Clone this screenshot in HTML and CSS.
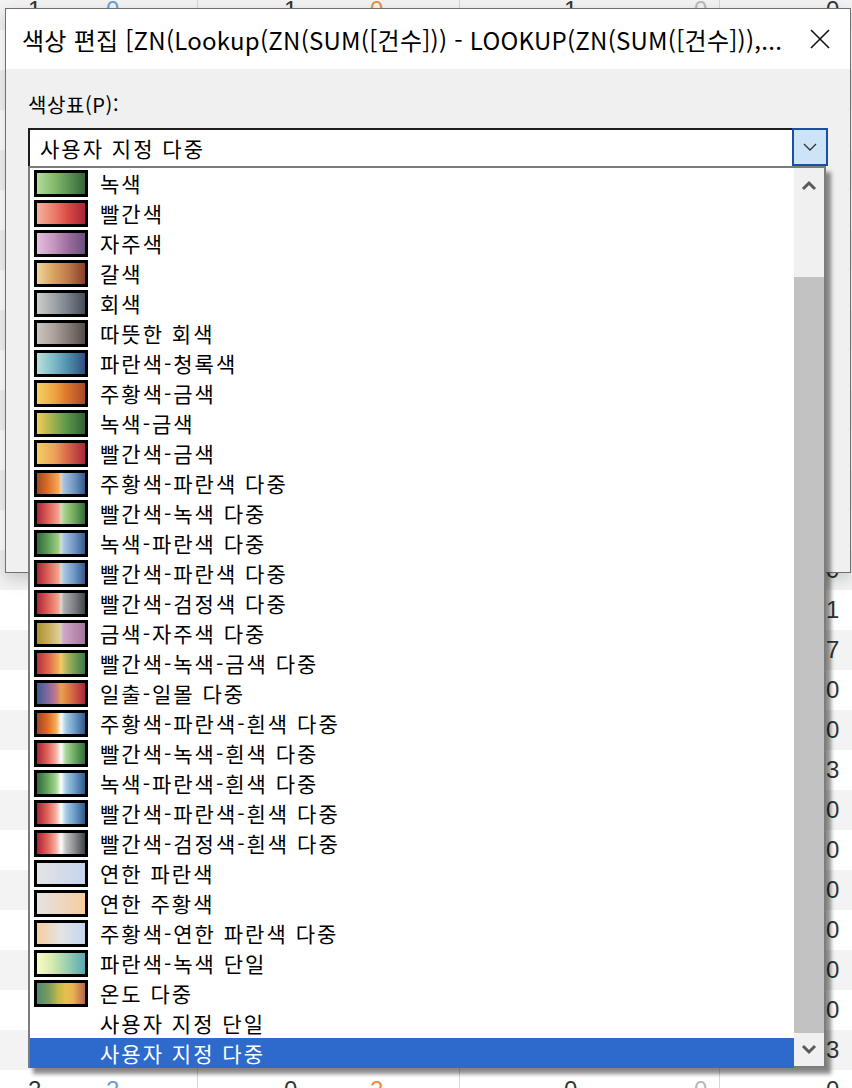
FILE: index.html
```html
<!DOCTYPE html>
<html lang="ko">
<head>
    <meta charset="UTF-8">
    <meta name="viewport" content="width=device-width, initial-scale=1.0">
    <title>색상 편집</title>
    <link rel="stylesheet" href="styles.css">
</head>
<body>
    <div id="sheet" class="sheet"></div>

    <div class="dialog">
        <div class="titlebar">
            <span class="title">색상 편집 [ZN(Lookup(ZN(SUM([건수])) - LOOKUP(ZN(SUM([건수])),...</span>
            <svg class="close-icon" width="22" height="22" viewBox="0 0 22 22">
                <line x1="2" y1="2" x2="20" y2="20" stroke="#111" stroke-width="1.6"/>
                <line x1="20" y1="2" x2="2" y2="20" stroke="#111" stroke-width="1.6"/>
            </svg>
        </div>
        <div class="dialog-body">
            <div class="field-label">색상표(P):</div>
            <div class="combo">
                <span class="combo-text">사용자 지정 다중</span>
                <div class="combo-btn">
                    <svg width="14" height="8" viewBox="0 0 14 8">
                        <polyline points="1,1 7,7 13,1" fill="none" stroke="#333" stroke-width="1.3"/>
                    </svg>
                </div>
            </div>
        </div>
    </div>

    <div class="dropdown">
        <ul class="options">
            <li><span class="swatch sw-green"></span>녹색</li>
            <li><span class="swatch sw-red"></span>빨간색</li>
            <li><span class="swatch sw-purple"></span>자주색</li>
            <li><span class="swatch sw-brown"></span>갈색</li>
            <li><span class="swatch sw-gray"></span>회색</li>
            <li><span class="swatch sw-warmgray"></span>따뜻한 회색</li>
            <li><span class="swatch sw-blueteal"></span>파란색-청록색</li>
            <li><span class="swatch sw-orangegold"></span>주황색-금색</li>
            <li><span class="swatch sw-greengold"></span>녹색-금색</li>
            <li><span class="swatch sw-redgold"></span>빨간색-금색</li>
            <li><span class="swatch sw-orange-blue"></span>주황색-파란색 다중</li>
            <li><span class="swatch sw-red-green"></span>빨간색-녹색 다중</li>
            <li><span class="swatch sw-green-blue"></span>녹색-파란색 다중</li>
            <li><span class="swatch sw-red-blue"></span>빨간색-파란색 다중</li>
            <li><span class="swatch sw-red-black"></span>빨간색-검정색 다중</li>
            <li><span class="swatch sw-gold-purple"></span>금색-자주색 다중</li>
            <li><span class="swatch sw-red-green-gold"></span>빨간색-녹색-금색 다중</li>
            <li><span class="swatch sw-sunrise"></span>일출-일몰 다중</li>
            <li><span class="swatch sw-orange-blue-white"></span>주황색-파란색-흰색 다중</li>
            <li><span class="swatch sw-red-green-white"></span>빨간색-녹색-흰색 다중</li>
            <li><span class="swatch sw-green-blue-white"></span>녹색-파란색-흰색 다중</li>
            <li><span class="swatch sw-red-blue-white"></span>빨간색-파란색-흰색 다중</li>
            <li><span class="swatch sw-red-black-white"></span>빨간색-검정색-흰색 다중</li>
            <li><span class="swatch sw-lightblue"></span>연한 파란색</li>
            <li><span class="swatch sw-lightorange"></span>연한 주황색</li>
            <li><span class="swatch sw-orange-lightblue"></span>주황색-연한 파란색 다중</li>
            <li><span class="swatch sw-bluegreen"></span>파란색-녹색 단일</li>
            <li><span class="swatch sw-temperature"></span>온도 다중</li>
            <li class="no-swatch">사용자 지정 단일</li>
            <li class="no-swatch selected">사용자 지정 다중</li>
        </ul>
        <div class="scrollbar">
            <div class="scroll-btn up">
                <svg width="16" height="11" viewBox="0 0 16 11">
                    <polyline points="2,9 8,3 14,9" fill="none" stroke="#5a5a5a" stroke-width="3"/>
                </svg>
            </div>
            <div class="scroll-track"><div class="scroll-thumb"></div></div>
            <div class="scroll-btn down">
                <svg width="16" height="11" viewBox="0 0 16 11">
                    <polyline points="2,2 8,8 14,2" fill="none" stroke="#5a5a5a" stroke-width="3"/>
                </svg>
            </div>
        </div>
    </div>

    <script>
        // worksheet rows behind the dialog (only the visible cells get numbers)
        var rightValues = { 14: '0', 15: '1', 16: '7', 17: '0', 18: '0', 19: '3', 20: '0',
            21: '0', 22: '0', 23: '0', 24: '0', 25: '0', 26: '3' };
        var firstRow = [['1', '0'], ['1', '0'], ['1', '0'], ['0', '']];
        var lastRow = [['2', '2'], ['0', '2'], ['0', '0'], ['0', '']];
        var empty = [['', ''], ['', ''], ['', '']];

        var sheet = document.getElementById('sheet');
        for (var i = 0; i < 28; i++) {
            var cells;
            if (i === 0) cells = firstRow;
            else if (i === 27) cells = lastRow;
            else cells = empty.concat([[rightValues[i] || '', '']]);
            var html = '';
            for (var c = 0; c < 4; c++) {
                html += '<div class="cell c' + (c + 1) + '"><span class="num">' + cells[c][0] +
                    '</span><span class="num alt">' + cells[c][1] + '</span></div>';
            }
            var row = document.createElement('div');
            row.className = 'row' + (i % 2 === 0 ? ' shaded' : '');
            row.innerHTML = html;
            sheet.appendChild(row);
        }
    </script>
</body>
</html>
```

FILE: styles.css
```css
body {
    margin: 0;
    padding: 0;
    width: 852px;
    height: 1088px;
    overflow: hidden;
    background-color: #ffffff;
    font-family: "Noto Sans CJK KR", "Noto Sans", sans-serif;
    position: relative;
}

/* worksheet in the background */
.sheet {
    margin-top: -10px;
}
.row {
    display: grid;
    grid-template-columns: 198px 262px 260px 1fr;
    height: 40px;
    background-color: #ffffff;
}
.row.shaded {
    background-color: #f3f3f3;
}
.cell {
    display: flex;
    align-items: center;
    border-right: 1px solid #d6d6d6;
    font-family: "Liberation Sans", Arial, sans-serif;
    font-size: 24px;
    color: #333;
}
.cell .num {
    width: 16px;
}
.c1 { padding-left: 28px; gap: 62px; }
.c2 { padding-left: 86px; gap: 70px; }
.c3 { padding-left: 104px; gap: 114px; }
.c4 { padding-left: 106px; border-right: none; }
.c1 .alt { color: #6b9fd2; }
.c2 .alt { color: #ef8c3c; }
.c3 .alt { color: #b8b8b8; }

/* dialog */
.dialog {
    position: absolute;
    left: 5px;
    top: 8px;
    width: 846px;
    height: 565px;
    box-sizing: border-box;
    border: 1px solid #707070;
    background-color: #f0f0f0;
    box-shadow: 0 6px 16px rgba(0, 0, 0, 0.18);
}
.titlebar {
    height: 60px;
    background-color: #ffffff;
    display: flex;
    align-items: center;
    justify-content: space-between;
    padding: 0 19px 0 16px;
}
.title {
    font-size: 24px;
    letter-spacing: 0.25px;
    color: #000;
    white-space: nowrap;
}
.dialog-body {
    padding: 24px 21px 0 22px;
}
.field-label {
    font-size: 20px;
    letter-spacing: 0.6px;
    line-height: 24px;
    color: #000;
    margin-bottom: 11px;
}
.combo {
    height: 38px;
    width: 800px;
    box-sizing: border-box;
    border-top: 2px solid #1e1e1e;
    border-left: 2px solid #1e1e1e;
    background-color: #ffffff;
    display: flex;
    align-items: center;
    justify-content: space-between;
}
.combo-text {
    font-size: 21px;
    letter-spacing: 2px;
    padding-left: 10px;
}
.combo-btn {
    width: 36px;
    height: 38px;
    margin-top: -2px;
    box-sizing: border-box;
    border: 2px solid #1c4f9f;
    background-color: #cce4f7;
    display: flex;
    align-items: center;
    justify-content: center;
}

/* open drop-down list */
.dropdown {
    position: absolute;
    left: 28px;
    top: 166px;
    width: 798px;
    height: 902px;
    box-sizing: border-box;
    border: 2px solid #7c7c7c;
    background-color: #ffffff;
    display: flex;
    box-shadow: 5px 6px 4px rgba(0, 0, 0, 0.45);
}
.options {
    list-style: none;
    margin: 0;
    padding: 0;
    flex: 1;
}
.options li {
    height: 30px;
    display: flex;
    align-items: center;
    padding-left: 4px;
    font-size: 21px;
    letter-spacing: 2px;
    color: #000;
    white-space: nowrap;
}
.options li.no-swatch {
    padding-left: 70px;
}
.options li.selected {
    background-color: #2e6acb;
    color: #ffffff;
}
.swatch {
    width: 54px;
    height: 27px;
    box-sizing: border-box;
    border: 3px solid #000;
    margin-right: 12px;
    flex-shrink: 0;
}
.scrollbar {
    width: 30px;
    background-color: #f0f0f0;
    display: flex;
    flex-direction: column;
}
.scroll-btn {
    display: flex;
    align-items: center;
    justify-content: center;
}
.scroll-btn.up {
    height: 36px;
}
.scroll-btn.down {
    height: 34px;
}
.scroll-track {
    flex: 1;
    padding-top: 74px;
}
.scroll-thumb {
    height: 756px;
    background-color: #c2c2c2;
}

/* palette swatches */
.sw-green { background: linear-gradient(to right, #b0dd9a, #86bb6c 35%, #5e9654 65%, #326538); }
.sw-red { background: linear-gradient(to right, #f6b0a0, #ec7d6a 35%, #d84a44 65%, #a8243a); }
.sw-purple { background: linear-gradient(to right, #e8bde0, #c595bf 35%, #9c6d9e 65%, #6b4e7c); }
.sw-brown { background: linear-gradient(to right, #efd49e, #d8a25e 35%, #bc7a4a 65%, #8a3e2b); }
.sw-gray { background: linear-gradient(to right, #cbcdcc, #a1a6a8 35%, #77808a 65%, #454c57); }
.sw-warmgray { background: linear-gradient(to right, #cdc5c0, #aaa29c 35%, #837c77 65%, #534c49); }
.sw-blueteal { background: linear-gradient(to right, #b8e2d8, #7eb9c8 35%, #4f8eac 65%, #2f4f80); }
.sw-orangegold { background: linear-gradient(to right, #f5d062, #eea645 35%, #df7a2e 60%, #a8472a); }
.sw-greengold { background: linear-gradient(to right, #f0cf55, #a9b34e 30%, #5e9a4c 60%, #2f6137); }
.sw-redgold { background: linear-gradient(to right, #f4cf66, #eea35a 35%, #d86548 65%, #a8273b); }
.sw-orange-blue { background: linear-gradient(to right, #a04826, #d96e2a 22%, #f5aa5a 45%, #dad6c8 50%, #a5c1dd 56%, #6e95c0 78%, #34598c); }
.sw-red-green { background: linear-gradient(to right, #a8263a, #dc5f55 22%, #f4a590 45%, #d8d8b8 50%, #a8d48e 56%, #70a85e 78%, #346a3a); }
.sw-green-blue { background: linear-gradient(to right, #2f6a3c, #5e9c56 22%, #9fd086 45%, #d6dcd6 50%, #a8c4e0 56%, #6f95c2 78%, #34598c); }
.sw-red-blue { background: linear-gradient(to right, #a8263a, #dc5f55 22%, #f4a590 45%, #dbd9d9 50%, #a8c6e2 56%, #6f95c2 78%, #34598c); }
.sw-red-black { background: linear-gradient(to right, #a8263a, #dc5f55 22%, #f4a590 45%, #d9d9d9 50%, #adadad 56%, #7d7f84 78%, #40444c); }
.sw-gold-purple { background: linear-gradient(to right, #ad9030, #c8b060 25%, #e2ce98 47%, #d6d0cc 50%, #d0a8cc 55%, #bb8cb0 78%, #a8759c); }
.sw-red-green-gold { background: linear-gradient(to right, #b3323c, #df6c4c 25%, #f0b05a 45%, #f2cc62 50%, #b7b85e 60%, #6e9a55 80%, #3f7a47); }
.sw-sunrise { background: linear-gradient(to right, #3c5a94, #8d6a9e 25%, #c9788a 40%, #e8a24c 50%, #de7e42 65%, #c44c40 85%, #a4263a); }
.sw-orange-blue-white { background: linear-gradient(to right, #a0452a, #df6a26 22%, #f6ac58 40%, #ffffff 50%, #a6cde6 60%, #6e9cc8 78%, #2f5a8c); }
.sw-red-green-white { background: linear-gradient(to right, #aa2238, #e06458 22%, #f7b0a4 40%, #ffffff 50%, #a8d898 60%, #6eaa62 78%, #346a3c); }
.sw-green-blue-white { background: linear-gradient(to right, #2f6a3c, #66a55c 22%, #a8d790 40%, #ffffff 50%, #a6cde6 60%, #6e9cc8 78%, #2f5a8c); }
.sw-red-blue-white { background: linear-gradient(to right, #aa2238, #e06458 22%, #f7b0a4 40%, #ffffff 50%, #a6cde6 60%, #6e9cc8 78%, #2f5a8c); }
.sw-red-black-white { background: linear-gradient(to right, #aa2238, #e06458 22%, #f7b0a4 40%, #ffffff 50%, #c2c2c2 60%, #8a8c90 78%, #3e4248); }
.sw-lightblue { background: linear-gradient(to right, #e4e4e4, #c5d4ee); }
.sw-lightorange { background: linear-gradient(to right, #e3e3e3, #f8cc9e); }
.sw-orange-lightblue { background: linear-gradient(to right, #f8cc9e, #e4e4e4 50%, #c5d4ee); }
.sw-bluegreen { background: linear-gradient(to right, #f8fcc8, #d9ecae 30%, #98cdb0 65%, #58a8b4); }
.sw-temperature { background: linear-gradient(to right, #4e8a74, #7d9c5c 25%, #c4ba48 45%, #e6c04e 60%, #e6b452 75%, #b8664a); }
```
